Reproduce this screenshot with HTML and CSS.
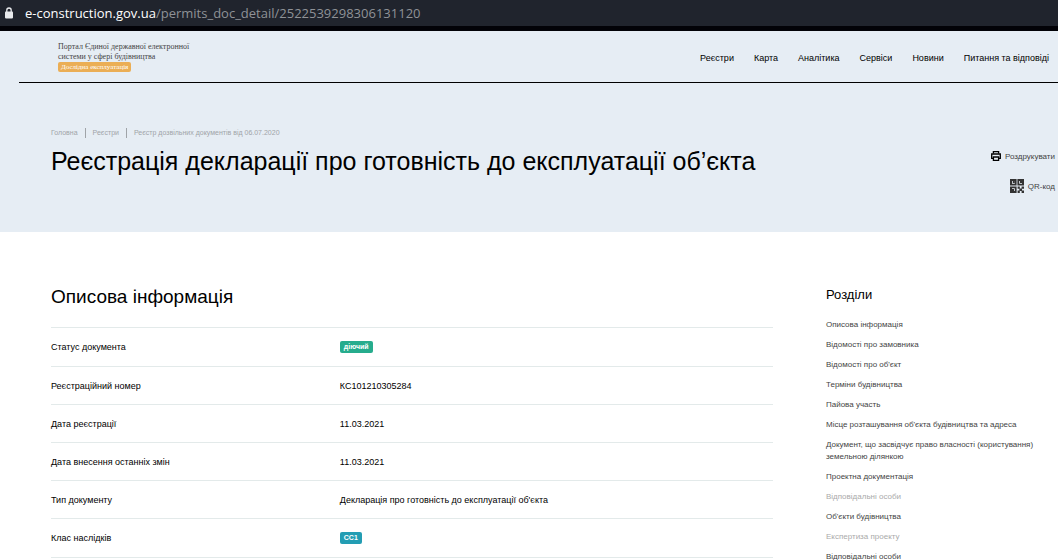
FILE: index.html
```html
<!DOCTYPE html>
<html lang="uk">
<head>
    <meta charset="UTF-8">
    <meta name="viewport" content="width=device-width, initial-scale=1.0">
    <title>Реєстрація декларації про готовність до експлуатації об’єкта</title>
    <link rel="stylesheet" href="styles.css">
</head>
<body>
    <div class="address-bar">
        <svg class="lock" viewBox="0 0 10 12" width="10" height="12" aria-hidden="true">
            <path d="M2.8 5V3.2a2.2 2.2 0 0 1 4.4 0V5" fill="none" stroke="#e8eaed" stroke-width="1.3"/>
            <rect x="1" y="4.6" width="8" height="6.8" rx="0.8" fill="#e8eaed"/>
        </svg>
        <div class="url"><span class="host">e-construction.gov.ua</span>/permits_doc_detail/2522539298306131120</div>
    </div>

    <header class="header">
        <a class="logo" href="#">
            Портал Єдиної державної електронної<br>системи у сфері будівництва
            <span class="test-mode">Дослідна експлуатація</span>
        </a>
        <nav class="menu">
            <a href="#">Реєстри</a>
            <a href="#">Карта</a>
            <a href="#">Аналітика</a>
            <a href="#">Сервіси</a>
            <a href="#">Новини</a>
            <a href="#">Питання та відповіді</a>
        </nav>
    </header>

    <section class="hero">
        <div class="hero-main">
            <nav class="breadcrumbs">
                <a href="#">Головна</a>
                <a href="#">Реєстри</a>
                <a href="#">Реєстр дозвільних документів від 06.07.2020</a>
            </nav>
            <h1>Реєстрація декларації про готовність до експлуатації об’єкта</h1>
        </div>
        <div class="actions">
            <button type="button" class="action">
                <svg viewBox="0 0 10 10" width="10" height="10" fill="none" stroke="#000" stroke-width="1.3" aria-hidden="true">
                    <path d="M2.4 2.6V0.7h5.2v1.9"/>
                    <path d="M2.2 7.4H0.7V3h8.6v4.4H7.8"/>
                    <path d="M2.4 6h5.2v3.3H2.4z"/>
                </svg>
                Роздрукувати
            </button>
            <button type="button" class="action">
                <svg viewBox="0 0 14 14" width="14" height="14" aria-hidden="true">
                    <path fill="#333" d="M0 0h6.6v6.6H0zM7.4 0H14v6.6H7.4zM0 7.4h6.6V14H0z"/>
                    <path fill="#e6edf4" d="M2 2h2.8v2.8H2zM9.2 2H12v2.8H9.2zM2 9.2h2.8V12H2z"/>
                    <path fill="#333" d="M2.8 2H4.8v2H2.8zM10 2h2v2h-2zM2 10h2v2H2z"/>
                    <path fill="#333" d="M7.6 7.6h2.2v2.2H7.6zM11.6 7.6H14v2.2h-2.4zM9.4 9.4h2.6v2.6H9.4zM7.6 11.6h2.2V14H7.6zM11.6 11.6H14V14h-2.4z"/>
                </svg>
                QR-код
            </button>
        </div>
    </section>

    <main class="content">
        <section class="info">
            <h2>Описова інформація</h2>
            <table class="info-table">
                <tr class="with-badge">
                    <th scope="row">Статус документа</th>
                    <td><span class="badge badge-green">діючий</span></td>
                </tr>
                <tr>
                    <th scope="row">Реєстраційний номер</th>
                    <td>КС101210305284</td>
                </tr>
                <tr>
                    <th scope="row">Дата реєстрації</th>
                    <td>11.03.2021</td>
                </tr>
                <tr>
                    <th scope="row">Дата внесення останніх змін</th>
                    <td>11.03.2021</td>
                </tr>
                <tr>
                    <th scope="row">Тип документу</th>
                    <td>Декларація про готовність до експлуатації об'єкта</td>
                </tr>
                <tr class="with-badge">
                    <th scope="row">Клас наслідків</th>
                    <td><span class="badge badge-blue">СС1</span></td>
                </tr>
            </table>
        </section>

        <aside class="sections">
            <h3>Розділи</h3>
            <ul>
                <li><a href="#">Описова інформація</a></li>
                <li><a href="#">Відомості про замовника</a></li>
                <li><a href="#">Відомості про об'єкт</a></li>
                <li><a href="#">Терміни будівництва</a></li>
                <li><a href="#">Пайова участь</a></li>
                <li><a href="#">Місце розташування об'єкта будівництва та адреса</a></li>
                <li><a href="#">Документ, що засвідчує право власності (користування) земельною ділянкою</a></li>
                <li><a href="#">Проектна документація</a></li>
                <li><a class="muted" href="#">Відповідальні особи</a></li>
                <li><a href="#">Об'єкти будівництва</a></li>
                <li><a class="muted" href="#">Експертиза проекту</a></li>
                <li><a href="#">Відповідальні особи</a></li>
            </ul>
        </aside>
    </main>
</body>
</html>
```

FILE: styles.css
```css
* {
    box-sizing: border-box;
}
body {
    margin: 0;
    font-family: "Liberation Sans", Arial, sans-serif;
    font-size: 9px;
    color: #000;
    background-color: #fff;
    overflow: hidden;
}
a {
    color: inherit;
    text-decoration: none;
}
h1, h2, h3 {
    margin: 0;
    font-weight: normal;
}

/* address bar */
.address-bar {
    display: flex;
    align-items: center;
    gap: 11px;
    height: 31px;
    padding-left: 4px;
    background-color: #20242d;
    border-bottom: 5px solid #020207;
}
.url {
    font-family: "Open Sans", "Noto Sans", sans-serif;
    font-size: 13px;
    line-height: 20px;
    color: #8f9297;
}
.host {
    color: #fff;
}

/* header */
.header {
    display: flex;
    justify-content: space-between;
    align-items: center;
    height: 52px;
    margin-left: 19px;
    padding: 0 9px 0 39px;
    border-bottom: 1px solid #000;
}
.header,
.hero {
    background-color: #e6edf4;
}
.header {
    box-shadow: -19px 0 0 #e6edf4;
}
.logo {
    font-family: "Liberation Serif", "Times New Roman", serif;
    font-size: 8px;
    line-height: 10px;
    color: #444;
}
.test-mode {
    display: block;
    width: fit-content;
    padding: 0 3px;
    border-radius: 2px;
    background-color: #ebae55;
    color: #fff;
    font-size: 7px;
}
.menu {
    display: flex;
    gap: 20px;
    padding-top: 2px;
}

/* hero */
.hero {
    display: flex;
    justify-content: space-between;
    height: 149px;
    padding: 45px 3px 0 51px;
}
.breadcrumbs {
    display: flex;
    font-size: 7px;
    line-height: 10px;
    color: #a0a4a8;
}
.breadcrumbs a + a {
    margin-left: 7px;
    padding-left: 7px;
    border-left: 1px solid #a0a4a8;
}
h1 {
    margin-top: 7px;
    font-size: 25px;
    line-height: 32px;
}
.actions {
    display: flex;
    flex-direction: column;
    align-items: flex-end;
    gap: 14px;
    padding-top: 20px;
}
.action {
    display: flex;
    align-items: center;
    gap: 4px;
    height: 16px;
    padding: 0;
    border: 0;
    background: none;
    font-family: inherit;
    font-size: 8px;
    color: #444;
    cursor: pointer;
}

/* content */
.content {
    display: grid;
    grid-template-columns: 722fr 232fr;
    gap: 53px;
    padding: 53px 0 0 51px;
}
h2 {
    font-size: 19px;
    line-height: 24px;
}
.info-table {
    width: 100%;
    margin-top: 18px;
    border-collapse: collapse;
    border-top: 1px solid #e3eaea;
}
.info-table tr {
    height: 38px;
    border-bottom: 1px solid #e3eaea;
}
.info-table .with-badge {
    height: 39px;
}
.info-table th,
.info-table td {
    padding: 0;
    font-weight: normal;
    text-align: left;
}
.info-table th {
    width: 40%;
}
.badge {
    display: inline-block;
    padding: 0 4px;
    border-radius: 2px;
    font-size: 7px;
    font-weight: bold;
    line-height: 12px;
    color: #fff;
}
.badge-green {
    background-color: #26ac8d;
}
.badge-blue {
    background-color: #239db3;
}

/* sections list */
.sections h3 {
    font-size: 13px;
    line-height: 20px;
}
.sections ul {
    margin: 14px 0 0;
    padding: 0 20px 0 0;
    list-style: none;
    font-size: 8px;
    line-height: 12px;
    color: #444;
}
.sections li {
    margin-bottom: 8px;
}
.sections .muted {
    color: #aaa;
}
```
